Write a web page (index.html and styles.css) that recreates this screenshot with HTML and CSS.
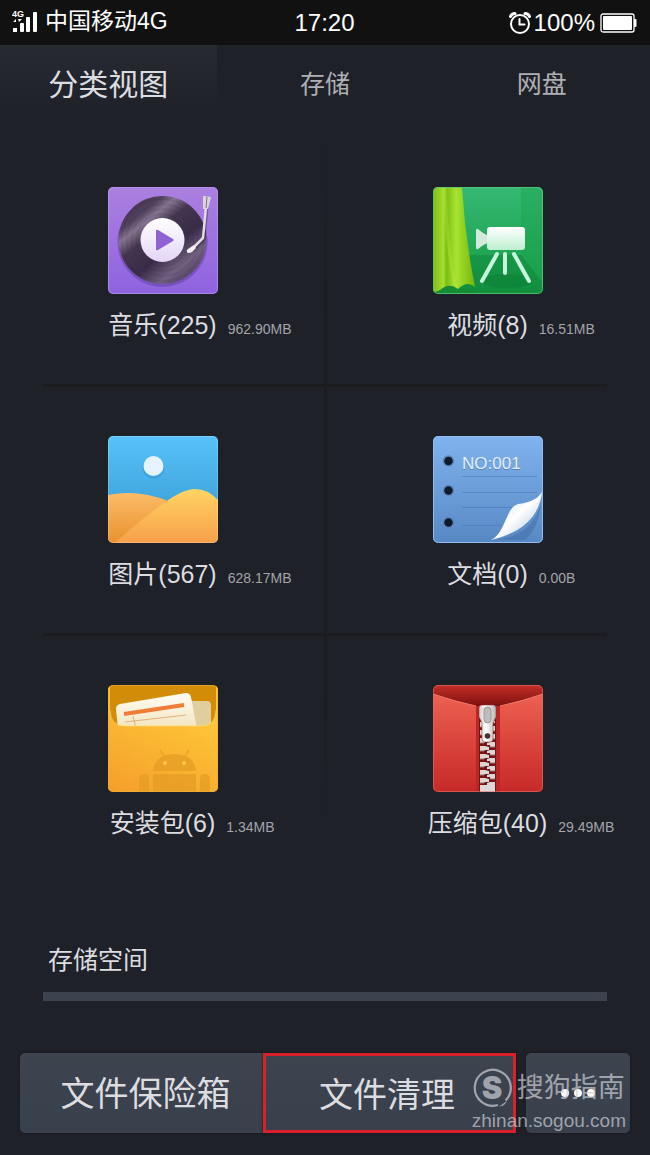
FILE: index.html
```
<!DOCTYPE html>
<html lang="zh-CN">
<head>
    <meta charset="UTF-8">
    <meta name="viewport" content="width=device-width, initial-scale=1.0">
    <title>文件管理</title>
    <link rel="stylesheet" href="styles.css">
</head>
<body>
    <header class="status-bar">
        <div class="carrier">
            <svg width="26" height="26" viewBox="0 0 26 26" fill="#fff">
                <text x="0" y="9" font-size="9" font-weight="bold">4G</text>
                <path d="M1 14l3-3v3zM6 11h4l-3 3z"/>
                <rect x="1" y="20" width="4" height="4"/>
                <rect x="8" y="15" width="4" height="9" rx="1"/>
                <rect x="14" y="9" width="4" height="15" rx="1"/>
                <rect x="21" y="4" width="4" height="20" rx="1"/>
            </svg>
            <span>中国移动4G</span>
        </div>
        <div class="clock">17:20</div>
        <div class="power">
            <svg width="22" height="24" viewBox="0 0 22 24" fill="none" stroke="#fff" stroke-width="2" stroke-linecap="round">
                <circle cx="11" cy="13" r="9"/>
                <path d="M10.500 8v5.500h5"/>
                <path d="M1.500 5.500Q2.500 2.500 6 2.500M16 2.500q3.500 0 4.500 3" stroke-width="3"/>
            </svg>
            <span>100%</span>
            <svg class="battery" width="37" height="20" viewBox="0 0 37 20">
                <rect x="1" y="1" width="33" height="18" rx="2" fill="none" stroke="#fff" stroke-width="1.300"/>
                <rect x="3" y="3" width="29" height="14" rx="1" fill="#fff"/>
                <path d="M34 6h1.500q1 0 1 1v6q0 1-1 1H34z" fill="#fff"/>
            </svg>
        </div>
    </header>

    <nav class="tabs">
        <button class="tab active">分类视图</button>
        <button class="tab">存储</button>
        <button class="tab">网盘</button>
    </nav>

    <main>
        <div class="categories">
            <a class="category" href="#music">
                <svg class="icon" viewBox="0 0 110 107">
                    <defs>
                        <linearGradient id="purple" x2="0" y2="1"><stop stop-color="#ab80e0"/><stop offset="1" stop-color="#8f63e0"/></linearGradient>
                        <linearGradient id="vinyl" x1="0.1" y1="0" x2="0.9" y2="1">
                            <stop stop-color="#3c3048"/><stop offset="0.2" stop-color="#50415e"/><stop offset="0.28" stop-color="#85748f"/><stop offset="0.4" stop-color="#44364f"/>
                            <stop offset="0.6" stop-color="#392c48"/><stop offset="0.78" stop-color="#716080"/><stop offset="1" stop-color="#403250"/>
                        </linearGradient>
                        <linearGradient id="label" x2="0" y2="1"><stop stop-color="#fff"/><stop offset="1" stop-color="#e3d6f7"/></linearGradient>
                    </defs>
                    <rect width="110" height="107" rx="5" fill="url(#purple)"/>
                    <rect x="0.500" y="0.500" width="109" height="106" rx="5" fill="none" stroke="#b996ee" stroke-opacity="0.7"/>
                    <circle cx="54.500" cy="55" r="45" fill="#6844a8" opacity="0.6"/>
                    <circle cx="54.500" cy="53" r="44" fill="url(#vinyl)"/>
                    <g fill="none" stroke="#251b30" stroke-opacity="0.12">
                        <circle cx="54.500" cy="53" r="41"/>
                        <circle cx="54.500" cy="53" r="36"/>
                        <circle cx="54.500" cy="53" r="31"/>
                        <circle cx="54.500" cy="53" r="26"/>
                    </g>
                    <circle cx="54.500" cy="53" r="22" fill="url(#label)"/>
                    <path d="M48 44q0-2 2-1l15 9q1.500 1 0 2l-15 9q-2 1-2-1z" fill="#8f62d4"/>
                    <path d="M99 20L96 52 84 64" fill="none" stroke="#271b35" stroke-opacity="0.4" stroke-width="3"/>
                    <path d="M98 20L95 51 84 62" fill="none" stroke="#e0dce3" stroke-width="2.500" stroke-linejoin="round"/>
                    <path d="M95 9l8 1-3 12h-5z" fill="#dad5dc"/>
                    <path d="M99 10l-1 11" stroke="#77707d"/>
                    <path d="M80 62l6-4 2 3-4 4q-4 2-5 0t1-3z" fill="#f4f1f5"/>
                </svg>
                <div class="caption"><span class="name">音乐(225)</span><span class="size">962.90MB</span></div>
            </a>

            <a class="category" href="#video">
                <svg class="icon" viewBox="0 0 110 107">
                    <defs>
                        <linearGradient id="green" x2="0" y2="1"><stop stop-color="#35b873"/><stop offset="1" stop-color="#169b43"/></linearGradient>
                        <linearGradient id="curtain"><stop stop-color="#7bbd15"/><stop offset="0.25" stop-color="#a4de2e"/><stop offset="0.32" stop-color="#7cbd14"/><stop offset="0.55" stop-color="#a8e332"/><stop offset="0.8" stop-color="#8acb1c"/><stop offset="1" stop-color="#72b50f"/></linearGradient>
                        <linearGradient id="camera" x2="0" y2="1"><stop stop-color="#fff"/><stop offset="1" stop-color="#bcefd0"/></linearGradient>
                        <clipPath id="tile"><rect width="110" height="107" rx="5"/></clipPath>
                    </defs>
                    <g clip-path="url(#tile)">
                        <rect width="110" height="107" fill="url(#green)"/>
                        <path d="M88 0h22v107L88 68z" fill="#18a34e" opacity="0.4"/>
                        <path d="M30 68h58l22 28v11H30z" fill="#0a7c34" opacity="0.4"/>
                        <ellipse cx="74" cy="94" rx="25" ry="7" fill="#0b7833" opacity="0.4"/>
                        <path d="M0 107V95l42 8v4z" fill="#148b34"/>
                        <path d="M0 0h29q3 50 13 100-8-7-17 2-9-7-18 1-3 2-7 2z" fill="url(#curtain)"/>
                        <path d="M10 0q1 50 10 98l4 3Q14 50 14 0z" fill="#bced42" opacity="0.3"/>
                        <rect x="0.500" y="0.500" width="109" height="106" rx="5" fill="none" stroke="#57c77a" stroke-opacity="0.8"/>
                    </g>
                    <path d="M45 42q7 6 10 6v8q-4 1-10 6-2 1-2-2V44q0-3 2-2z" fill="#d3eadd"/>
                    <rect x="54" y="40" width="38" height="23" rx="3" fill="url(#camera)"/>
                    <path d="M64 67L49 94M72 67v19M81 67l15 27" stroke="#c5f7da" stroke-width="4" stroke-linecap="round"/>
                </svg>
                <div class="caption"><span class="name">视频(8)</span><span class="size">16.51MB</span></div>
            </a>

            <a class="category" href="#pictures">
                <svg class="icon" viewBox="0 0 110 107">
                    <defs>
                        <linearGradient id="sky" x2="0" y2="1"><stop stop-color="#58c2fa"/><stop offset="0.6" stop-color="#41a6de"/></linearGradient>
                        <linearGradient id="backDune" x2="0" y2="1"><stop stop-color="#fcbb68"/><stop offset="1" stop-color="#e9922d"/></linearGradient>
                        <linearGradient id="frontDune" x2="0" y2="1"><stop stop-color="#fed563"/><stop offset="0.5" stop-color="#fcb957"/><stop offset="1" stop-color="#f6a04b"/></linearGradient>
                    </defs>
                    <g clip-path="url(#tile)">
                        <rect width="110" height="107" fill="url(#sky)"/>
                        <circle cx="45.500" cy="32" r="11" fill="#2585bd" opacity="0.25"/>
                        <circle cx="45.500" cy="30" r="10" fill="#e6f3fe"/>
                        <path d="M0 59q30-6 60 6L20 107H0z" fill="url(#backDune)"/>
                        <path d="M7 107Q32 84 56 67q19-14 31-14 13 0 23 11v43z" fill="url(#frontDune)"/>
                        <rect x="0.500" y="0.500" width="109" height="106" rx="5" fill="none" stroke="#fff" stroke-opacity="0.2"/>
                    </g>
                </svg>
                <div class="caption"><span class="name">图片(567)</span><span class="size">628.17MB</span></div>
            </a>

            <a class="category" href="#documents">
                <svg class="icon" viewBox="0 0 110 107">
                    <defs>
                        <linearGradient id="blue" x2="0" y2="1"><stop stop-color="#80b4ee"/><stop offset="1" stop-color="#5788c4"/></linearGradient>
                        <linearGradient id="curl" x2="1" y2="1"><stop offset="0.2" stop-color="#d5e1ed"/><stop offset="0.5" stop-color="#fff"/><stop offset="0.8" stop-color="#c6d6e8"/></linearGradient>
                    </defs>
                    <rect width="110" height="107" rx="5" fill="url(#blue)"/>
                    <rect x="0.500" y="0.500" width="109" height="106" rx="5" fill="none" stroke="#91bdf0"/>
                    <path d="M29 40.500h75M29 56.500h75M29 71.500h50M29 89.500h40" stroke="#4d7bb6" stroke-opacity="0.6"/>
                    <g fill="#0d1b2d" stroke="#5c86b8" stroke-width="1.500">
                        <circle cx="15.500" cy="25" r="5"/>
                        <circle cx="15.500" cy="54.500" r="5"/>
                        <circle cx="15.500" cy="86.500" r="5"/>
                    </g>
                    <text x="29" y="34" font-size="17" fill="#5580b5">NO:001</text>
                    <text x="29" y="33" font-size="17" fill="#e2effc">NO:001</text>
                    <path d="M62 104q38-4 46-38-1 24-16 38z" fill="#3f6ca6" opacity="0.5"/>
                    <path d="M58 104C73 97 72 72 85 68q18-2 24-12-4 37-51 48z" fill="url(#curl)"/>
                </svg>
                <div class="caption"><span class="name">文档(0)</span><span class="size">0.00B</span></div>
            </a>

            <a class="category" href="#packages">
                <svg class="icon" viewBox="0 0 110 107">
                    <defs>
                        <linearGradient id="pocket" x1="0" y1="1" x2="0.5" y2="0"><stop stop-color="#f59e2a"/><stop offset="0.7" stop-color="#fcbd35"/><stop offset="1" stop-color="#ffc83d"/></linearGradient>
                        <linearGradient id="paper" x2="0" y2="1"><stop stop-color="#fffdf5"/><stop offset="1" stop-color="#f2e4bd"/></linearGradient>
                    </defs>
                    <g clip-path="url(#tile)">
                        <rect width="110" height="107" fill="#d28c07"/>
                        <path d="M78 16h21q4 0 4 4v24H78z" fill="#e0cf9c"/>
                        <path d="M8 24q0-4 4-5L78 8q4 0 5 4l6 32H10z" fill="url(#paper)"/>
                        <path d="M16 29l60-9" stroke="#f07c3a" stroke-width="4"/>
                        <path d="M17 37l61-7M25 31l3 12" stroke="#dba268" stroke-width="0.800"/>
                        <path d="M0 0h2v27q1 14 15 14h76q14 0 15-14V0h2v107H0z" fill="url(#pocket)"/>
                        <path d="M2 25q0 16 15 16h76q15 0 15-16" fill="none" stroke="#ffda6b" stroke-opacity="0.7"/>
                        <g fill="#e29a22" opacity="0.65">
                            <path d="M45 86q2-17 21.500-17T88 86z"/>
                            <path d="M45 89h43v18H45zM31 107V94q0-5 5-5t5 5v13zM92 107V94q0-5 5-5t5 5v13z"/>
                            <path d="M52 65l5 8M81 65l-5 8" stroke="#e29a22" stroke-width="1.500"/>
                        </g>
                        <circle cx="57" cy="78" r="2" fill="#ffc746"/>
                        <circle cx="76" cy="78" r="2" fill="#ffc746"/>
                        <rect x="0.500" y="0.500" width="109" height="106" rx="5" fill="none" stroke="#efb236" stroke-opacity="0.6"/>
                    </g>
                </svg>
                <div class="caption"><span class="name">安装包(6)</span><span class="size">1.34MB</span></div>
            </a>

            <a class="category" href="#archives">
                <svg class="icon" viewBox="0 0 110 107">
                    <defs>
                        <linearGradient id="red" x2="0" y2="1"><stop stop-color="#ed6050"/><stop offset="1" stop-color="#c62a28"/></linearGradient>
                        <linearGradient id="inside" x2="0" y2="1"><stop stop-color="#c52e28"/><stop offset="0.2" stop-color="#7c100e"/><stop offset="1" stop-color="#b11f1c"/></linearGradient>
                        <linearGradient id="metal"><stop stop-color="#c9c9c9"/><stop offset="0.4" stop-color="#fff"/><stop offset="1" stop-color="#b5b5b5"/></linearGradient>
                        <pattern id="teeth" width="15" height="8" x="47" y="36" patternUnits="userSpaceOnUse">
                            <path d="M0 1h5l4 1v3H5L4 6H0zM15 5h-5L7 6v2h8zM15 0h-5v2h5z" fill="#dcd6d3"/>
                            <path d="M0 6h4M10 2h5" stroke="#8d7a78"/>
                        </pattern>
                    </defs>
                    <g clip-path="url(#tile)">
                        <rect width="110" height="107" fill="url(#inside)"/>
                        <path d="M0 9q20 7 43 12v86H0zM110 9q-20 7-43 12v86h43z" fill="url(#red)"/>
                        <path d="M0 9q20 7 43 12M110 9q-20 7-43 12" fill="none" stroke="#f47b6b"/>
                        <path d="M43 21h24v86H43z" fill="#bd2422"/>
                        <path d="M46 24h17v83H46z" fill="#741515"/>
                        <path d="M47 36h15v64H47z" fill="url(#teeth)"/>
                        <rect x="47" y="100" width="15" height="7" fill="#d9d9d9"/>
                        <path d="M46 23q0-3 3-3h11q3 0 3 3v9l-3 6v16q0 3-3 3h-5q-3 0-3-3V38l-3-6z" fill="url(#metal)" stroke="#8b3330" stroke-width="0.500"/>
                        <rect x="51" y="22" width="7" height="16" rx="3.500" fill="#bdbdbd" stroke="#999"/>
                        <circle cx="54.500" cy="51" r="2.800" fill="#46312f"/>
                        <rect x="0.500" y="0.500" width="109" height="106" rx="5" fill="none" stroke="#e07267" stroke-opacity="0.6"/>
                    </g>
                </svg>
                <div class="caption"><span class="name">压缩包(40)</span><span class="size">29.49MB</span></div>
            </a>
        </div>

        <div class="storage">
            <label for="space">存储空间</label>
            <progress id="space" value="0" max="100"></progress>
        </div>
    </main>

    <footer class="actions">
        <div class="action-group">
            <button class="btn safe-btn">文件保险箱</button>
            <button class="btn clean-btn">文件清理</button>
        </div>
        <button class="btn more-btn" aria-label="更多">
            <svg width="36" height="10" viewBox="0 0 36 10" fill="#fff">
                <circle cx="5" cy="5" r="4"/>
                <circle cx="18" cy="5" r="4"/>
                <circle cx="31" cy="5" r="4"/>
            </svg>
        </button>
        <div class="watermark">
            <div class="brand">
                <svg width="40" height="40" viewBox="0 0 40 40">
                    <path d="M26 37A18 18 0 1 1 33.500 32.500" fill="none" stroke="currentColor" stroke-width="2.200"/>
                    <path d="M27 38.500l8-5.500q-2 5-8 5.500z" fill="currentColor"/>
                    <text class="logo-letter" x="20" y="31" text-anchor="middle">S</text>
                </svg>
                <span>搜狗指南</span>
            </div>
            <div class="site">zhinan.sogou.com</div>
        </div>
    </footer>
</body>
</html>
```
FILE: styles.css
```
* {
    box-sizing: border-box;
}
body {
    font-family: "Liberation Sans", "Noto Sans CJK SC", sans-serif;
    background-color: #1e2128;
    color: #dcdde0;
    margin: 0;
    min-height: 100vh;
    display: flex;
    flex-direction: column;
}
button {
    font-family: inherit;
    color: inherit;
    border: none;
    padding: 0;
    cursor: pointer;
}
svg {
    display: block;
}

/* status bar */
.status-bar {
    display: grid;
    grid-template-columns: 1fr auto 1fr;
    align-items: center;
    height: 45px;
    padding: 0 13px 0 12px;
    background-color: #111;
    color: #fff;
    font-size: 24px;
}
.carrier {
    display: flex;
    align-items: center;
    gap: 7px;
    font-size: 23px;
    line-height: 28px;
    padding-bottom: 3px;
}
.power {
    display: flex;
    align-items: center;
    justify-content: flex-end;
    gap: 3px;
}
.battery {
    margin-left: 2px;
}

/* tabs */
.tabs {
    display: grid;
    grid-template-columns: repeat(3, 1fr);
    height: 79px;
}
.tab {
    background: none;
    padding-bottom: 5px;
    color: #aeb0b4;
    font-size: 25px;
}
.tab.active {
    background: linear-gradient(#272a30, #1e2128 90%);
    color: #dcdde0;
    font-size: 30px;
}

main {
    flex: 1;
}

/* categories, with dividers drawn as backgrounds */
.categories {
    display: grid;
    grid-template-columns: 1fr 1fr;
    grid-auto-rows: 249px;
    margin-top: 13px;
    background:
        linear-gradient(#1a1c20, #1a1c20) center 247px / calc(100% - 86px) 3px no-repeat,
        linear-gradient(#1a1c20, #1a1c20) center 496px / calc(100% - 86px) 3px no-repeat,
        linear-gradient(transparent, #1a1c20 30%, #1a1c20 70%, transparent 92%) center / 3px 100% no-repeat;
}
.category {
    display: flex;
    flex-direction: column;
    align-items: center;
    gap: 13px;
    padding-top: 50px;
    color: inherit;
    text-decoration: none;
}
.icon {
    width: 110px;
    height: 107px;
}
.caption {
    display: grid;
    grid-template-columns: 1fr auto 1fr;
    align-items: baseline;
    width: 100%;
    line-height: 36px;
}
.name {
    grid-column: 2;
    font-size: 25px;
}
.size {
    margin-left: 11px;
    color: #a3a5a8;
    font-size: 14px;
}

/* storage */
.storage {
    display: flex;
    flex-direction: column;
    gap: 14px;
    padding: 58px 43px 0;
}
.storage label {
    padding-left: 5px;
    font-size: 25px;
    line-height: 36px;
}
progress {
    appearance: none;
    display: block;
    width: 100%;
    height: 9px;
    border: none;
    background-color: #3c434e;
}
progress::-webkit-progress-bar {
    background-color: #3c434e;
}
progress::-webkit-progress-value {
    background-color: #5f9edb;
}

/* bottom buttons */
.actions {
    position: relative;
    display: flex;
    gap: 10px;
    padding: 20px 20px 22px;
}
.action-group {
    display: flex;
    flex: 1;
}
.btn {
    height: 80px;
    background: linear-gradient(#3d444e, #38404c);
    border-radius: 5px;
    box-shadow: 0 0 2px #111317;
    font-size: 34px;
}
.safe-btn {
    flex: 1;
    padding: 0 0 4px 8px;
    border-radius: 5px 0 0 5px;
}
.clean-btn {
    width: 51%;
    padding: 0 5px 2px 0;
    border: 3px solid #d9202d;
    border-radius: 0;
}
.more-btn {
    display: flex;
    align-items: center;
    justify-content: center;
    width: 104px;
}

.watermark {
    position: absolute;
    right: 24px;
    bottom: 21px;
    color: rgba(205, 208, 214, 0.7);
    pointer-events: none;
}
.brand {
    display: flex;
    align-items: center;
    gap: 5px;
    font-size: 27px;
    line-height: 40px;
}
.logo-letter {
    font-family: Inter, sans-serif;
    font-size: 31px;
    font-weight: 900;
    fill: currentColor;
}
.site {
    font-size: 19px;
    line-height: 26px;
}
```
